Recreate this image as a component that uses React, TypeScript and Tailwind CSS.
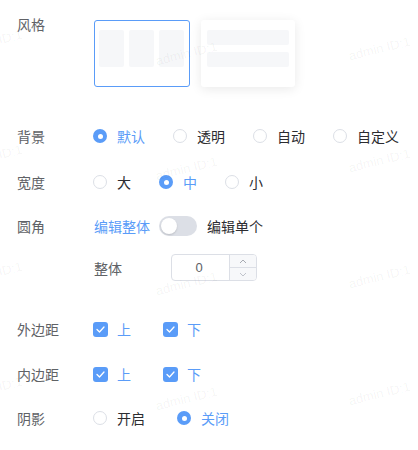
import { useState } from "react";

// watermark positions (left / top of each text box)
const marks = [
  "left-[-40px] top-[34px]",
  "left-[-40px] top-[149px]",
  "left-[-40px] top-[266px]",
  "left-[-40px] top-[381px]",
  "left-[155px] top-[46px]",
  "left-[155px] top-[161px]",
  "left-[155px] top-[276px]",
  "left-[155px] top-[391px]",
  "left-[348px] top-[41px]",
  "left-[348px] top-[153px]",
  "left-[348px] top-[269px]",
  "left-[348px] top-[386px]",
];

function Radio({ label, checked, onClick, className = "" }: { label: string; checked?: boolean; onClick?: () => void; className?: string }) {
  return (
    <div className={"flex items-center cursor-pointer " + className} onClick={onClick}>
      {checked ? (
        <span className="w-[14px] h-[14px] rounded-full bg-[#5a9cf8] flex items-center justify-center">
          <span className="w-[5px] h-[5px] rounded-full bg-white" />
        </span>
      ) : (
        <span className="w-[14px] h-[14px] rounded-full border border-[#dcdfe6] bg-white" />
      )}
      <span className={"ml-[10px] " + (checked ? "text-[#5a9cf8]" : "text-[#2c2c30]")}>{label}</span>
    </div>
  );
}

function Check({ label, className = "" }: { label: string; className?: string }) {
  return (
    <div className={"flex items-center " + className}>
      <span className="w-[15px] h-[15px] rounded-[3px] bg-[#5a9cf8] flex items-center justify-center">
        <svg width="9" height="7" viewBox="0 0 9 7" fill="none">
          <path d="M1 3.5L3.5 6L8 1" stroke="white" strokeWidth="1.3" strokeLinecap="round" strokeLinejoin="round" />
        </svg>
      </span>
      <span className="ml-[9px] text-[#5a9cf8]">{label}</span>
    </div>
  );
}

function Label({ children }: { children: React.ReactNode }) {
  return <div className="w-[77px] shrink-0 text-[#606266] leading-5">{children}</div>;
}

export default function App() {
  const [bg, setBg] = useState("默认");
  const [width, setWidth] = useState("中");
  const [shadow, setShadow] = useState("关闭");

  return (
    <div className="relative w-[418px] h-[450px] overflow-hidden bg-white text-[14px] pl-[17px] pt-[14px] font-['Noto_Sans_CJK_SC',sans-serif]">
      {/* 风格 */}
      <div className="flex items-start">
        <Label>风格</Label>
        <div className="flex gap-[11px] mt-[6px]">
          <div className="w-[96px] h-[67px] border border-[#5a9cf8] rounded-[3px] flex gap-[5px] pl-[4px] pr-[5px] pt-[9px]">
            <div className="flex-1 h-[37px] bg-[#f6f7f9] rounded-[2px]" />
            <div className="flex-1 h-[37px] bg-[#f6f7f9] rounded-[2px]" />
            <div className="flex-1 h-[37px] bg-[#f6f7f9] rounded-[2px]" />
          </div>
          <div className="w-[94px] h-[67px] rounded-[3px] bg-white shadow-[0_2px_12px_rgba(0,0,0,0.09)] flex flex-col gap-[7px] px-[6px] pt-[10px]">
            <div className="h-[15px] bg-[#f6f7f9] rounded-[2px]" />
            <div className="h-[15px] bg-[#f6f7f9] rounded-[2px]" />
          </div>
        </div>
      </div>

      {/* 背景 */}
      <div className="flex items-center h-5 mt-[39px]">
        <Label>背景</Label>
        <div className="flex items-center -ml-[1px]">
          {["默认", "透明", "自动", "自定义"].map((o, i) => (
            <Radio key={o} label={o} checked={bg === o} onClick={() => setBg(o)} className={i < 3 ? "mr-[28px]" : ""} />
          ))}
        </div>
      </div>

      {/* 宽度 */}
      <div className="flex items-center h-5 mt-[26px]">
        <Label>宽度</Label>
        <div className="flex items-center -ml-[1px]">
          {["大", "中", "小"].map((o, i) => (
            <Radio key={o} label={o} checked={width === o} onClick={() => setWidth(o)} className={i < 2 ? "mr-[28px]" : ""} />
          ))}
        </div>
      </div>

      {/* 圆角 */}
      <div className="flex items-center h-5 mt-[24px]">
        <Label>圆角</Label>
        <span className="text-[#5a9cf8]">编辑整体</span>
        <span className="ml-[9px] w-[38px] h-[20px] rounded-full bg-[#dcdfe6] relative">
          <span className="absolute left-[2px] top-[2px] w-[16px] h-[16px] rounded-full bg-white shadow-[0_1px_2px_rgba(0,0,0,0.15)]" />
        </span>
        <span className="ml-[10px] text-[#2c2c30]">编辑单个</span>
      </div>

      {/* 整体 */}
      <div className="flex items-center h-[27px] mt-[18px] pl-[77px]">
        <Label>整体</Label>
        <div className="w-[86px] h-[27px] border border-[#dcdfe6] rounded-[4px] flex overflow-hidden">
          <div className="flex-1 flex items-center justify-center pr-[3px] text-[#606266] text-[13px] font-['Liberation_Sans',sans-serif]">0</div>
          <div className="w-[27px] border-l border-[#dcdfe6] bg-[#f7f8fa] flex flex-col">
            <div className="flex-1 flex items-center justify-center border-b border-[#dcdfe6]">
              <svg width="8" height="5" viewBox="0 0 8 5" fill="none">
                <path d="M1 4L4 1L7 4" stroke="#a8abb2" strokeWidth="1" />
              </svg>
            </div>
            <div className="flex-1 flex items-center justify-center">
              <svg width="8" height="5" viewBox="0 0 8 5" fill="none">
                <path d="M1 1L4 4L7 1" stroke="#c0c4cc" strokeWidth="1" />
              </svg>
            </div>
          </div>
        </div>
      </div>

      {/* 外边距 */}
      <div className="flex items-center h-5 mt-[38px]">
        <Label>外边距</Label>
        <div className="flex items-center -ml-[1px]">
          <Check label="上" className="mr-[32px]" />
          <Check label="下" />
        </div>
      </div>

      {/* 内边距 */}
      <div className="flex items-center h-5 mt-[25px]">
        <Label>内边距</Label>
        <div className="flex items-center -ml-[1px]">
          <Check label="上" className="mr-[32px]" />
          <Check label="下" />
        </div>
      </div>

      {/* 阴影 */}
      <div className="flex items-center h-5 mt-[24px]">
        <Label>阴影</Label>
        <div className="flex items-center -ml-[1px]">
          <Radio label="开启" checked={shadow === "开启"} onClick={() => setShadow("开启")} className="mr-[32px]" />
          <Radio label="关闭" checked={shadow === "关闭"} onClick={() => setShadow("关闭")} />
        </div>
      </div>

      {/* watermark */}
      <div className="absolute inset-0 pointer-events-none">
        {marks.map((m) => (
          <div
            key={m}
            className={"absolute " + m + " -rotate-[14deg] text-[13px] leading-4 whitespace-nowrap text-[rgba(0,0,0,0.05)] font-['Liberation_Sans',sans-serif]"}
          >
            admin ID:1
          </div>
        ))}
      </div>
    </div>
  );
}
